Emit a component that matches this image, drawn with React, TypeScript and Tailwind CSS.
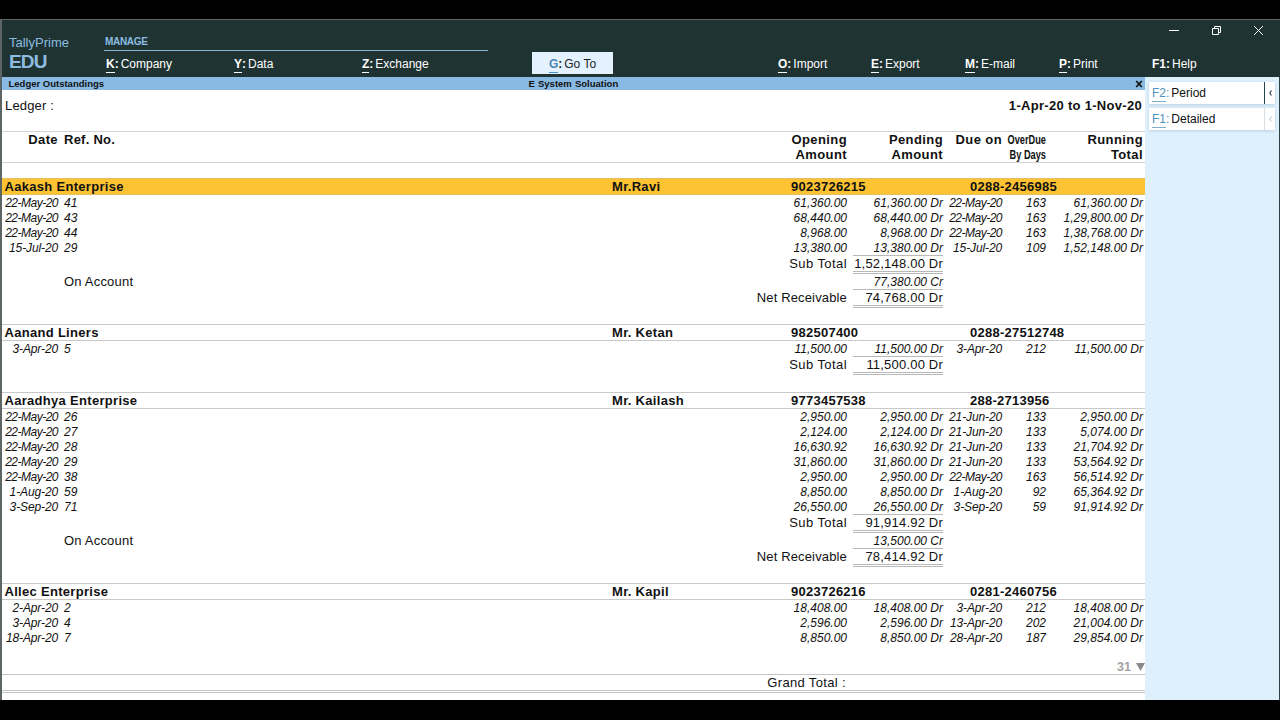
import React from "react";

type Entry = [date: string, ref: string, opening: string, due: string, days: string, running: string];

interface Party {
  name: string;
  contact: string;
  mobile: string;
  phone: string;
  entries: Entry[];
  subTotal?: string;
  onAccount?: string;
  net?: string;
  gap: string;
}

const parties: Party[] = [
  {
    name: "Aakash Enterprise", contact: "Mr.Ravi", mobile: "9023726215", phone: "0288-2456985",
    entries: [
      ["22-May-20", "41", "61,360.00", "22-May-20", "163", "61,360.00 Dr"],
      ["22-May-20", "43", "68,440.00", "22-May-20", "163", "1,29,800.00 Dr"],
      ["22-May-20", "44", "8,968.00", "22-May-20", "163", "1,38,768.00 Dr"],
      ["15-Jul-20", "29", "13,380.00", "15-Jul-20", "109", "1,52,148.00 Dr"],
    ],
    subTotal: "1,52,148.00 Dr", onAccount: "77,380.00 Cr", net: "74,768.00 Dr", gap: "mb-[16px]",
  },
  {
    name: "Aanand Liners", contact: "Mr. Ketan", mobile: "982507400", phone: "0288-27512748",
    entries: [["3-Apr-20", "5", "11,500.00", "3-Apr-20", "212", "11,500.00 Dr"]],
    subTotal: "11,500.00 Dr", gap: "mb-[17px]",
  },
  {
    name: "Aaradhya Enterprise", contact: "Mr. Kailash", mobile: "9773457538", phone: "288-2713956",
    entries: [
      ["22-May-20", "26", "2,950.00", "21-Jun-20", "133", "2,950.00 Dr"],
      ["22-May-20", "27", "2,124.00", "21-Jun-20", "133", "5,074.00 Dr"],
      ["22-May-20", "28", "16,630.92", "21-Jun-20", "133", "21,704.92 Dr"],
      ["22-May-20", "29", "31,860.00", "21-Jun-20", "133", "53,564.92 Dr"],
      ["22-May-20", "38", "2,950.00", "22-May-20", "163", "56,514.92 Dr"],
      ["1-Aug-20", "59", "8,850.00", "1-Aug-20", "92", "65,364.92 Dr"],
      ["3-Sep-20", "71", "26,550.00", "3-Sep-20", "59", "91,914.92 Dr"],
    ],
    subTotal: "91,914.92 Dr", onAccount: "13,500.00 Cr", net: "78,414.92 Dr", gap: "mb-[16px]",
  },
  {
    name: "Allec Enterprise", contact: "Mr. Kapil", mobile: "9023726216", phone: "0281-2460756",
    entries: [
      ["2-Apr-20", "2", "18,408.00", "3-Apr-20", "212", "18,408.00 Dr"],
      ["3-Apr-20", "4", "2,596.00", "13-Apr-20", "202", "21,004.00 Dr"],
      ["18-Apr-20", "7", "8,850.00", "28-Apr-20", "187", "29,854.00 Dr"],
    ],
    gap: "mb-0",
  },
];

const COLS = "grid grid-cols-[56px_693px_96px_96px_59px_44px_97px] whitespace-nowrap";

function MenuItem({ k, label, className }: { k: string; label: string; className: string }) {
  return (
    <div className={`flex h-[22px] shrink-0 items-center pt-[3px] text-[12px] leading-[15px] ${className}`}>
      <span className="border-b border-current font-bold">{k}</span>
      <span className="mr-[2px] pb-px font-bold">:</span>
      <span className="pb-px">{label}</span>
    </div>
  );
}

function DateText({ value }: { value: string }) {
  return <span className={value.includes("May") ? "tracking-[-0.5px]" : "tracking-[-0.12px]"}>{value}</span>;
}

function EntryRow({ entry }: { entry: Entry }) {
  const [date, ref, opening, due, days, running] = entry;
  return (
    <div className={`${COLS} h-[15px] text-right text-[12px] italic leading-[16px]`}>
      <DateText value={date} />
      <span className="pl-[6px] text-left">{ref}</span>
      <span>{opening}</span>
      <span>{opening} Dr</span>
      <DateText value={due} />
      <span>{days}</span>
      <span>{running}</span>
    </div>
  );
}

function TotalRow({ label, amount, labelClass }: { label: string; amount: string; labelClass: string }) {
  return (
    <div className="flex h-[19px] text-right text-[13px]">
      <span className={`w-[845px] leading-[18px] ${labelClass}`}>{label}</span>
      <span className="ml-[6px] w-[90px] border-b-[3px] border-t border-double border-[#b8b8b8] leading-[15px] tracking-[0.2px] [border-top-style:solid]">
        {amount}
      </span>
    </div>
  );
}

function PartyBlock({ party, selected }: { party: Party; selected: boolean }) {
  return (
    <section className={party.gap}>
      <div
        className={`flex h-[17px] border-y pl-[2.5px] text-[13px] font-bold leading-[16px] tracking-[0.3px] ${
          selected ? "border-[#e3bd62] bg-[#fdc333]" : "border-[#c9c9c9]"
        }`}
      >
        <span className="w-[607.5px]">{party.name}</span>
        <span className="w-[179px]">{party.contact}</span>
        <span className="w-[179px] tracking-[0.25px]">{party.mobile}</span>
        <span className="tracking-[0.25px]">{party.phone}</span>
      </div>
      {party.entries.map((e) => (
        <EntryRow key={e[0] + e[1]} entry={e} />
      ))}
      {party.subTotal && <TotalRow label="Sub Total" amount={party.subTotal} labelClass="tracking-[0.42px]" />}
      {party.onAccount && (
        <div className="flex h-[15px] leading-[16px]">
          <span className="w-[839px] pl-[62px] text-[13px] tracking-[0.2px]">On Account</span>
          <span className="w-[102px] text-right text-[12px] italic">{party.onAccount}</span>
        </div>
      )}
      {party.net && <TotalRow label="Net Receivable" amount={party.net} labelClass="tracking-[0.15px]" />}
    </section>
  );
}

function SideButton({ k, label, active }: { k: string; label: string; active: boolean }) {
  return (
    <div className="flex h-[22px] w-[126px] items-center bg-white text-[12px] shadow-[0_1px_3px_#b9cfdf]">
      <span className="ml-[3px] mt-px border-b border-[#7fb0d2] leading-[15px] text-[#5090bd]">{k}</span>
      <span className="mr-[2px] leading-[15px] text-[#5090bd]">:</span>
      <span className="flex-1 leading-[15px]">{label}</span>
      <span
        className={`flex h-full w-[11px] items-center justify-center border-l ${
          active ? "border-[#26444f] text-[#26444f]" : "border-[#d5dee5] text-[#c5ccd2]"
        }`}
      >
        <svg width="5" height="8" viewBox="0 0 5 8" fill="none" stroke="currentColor" strokeWidth="1.2">
          <path d="M3.5 1.5 1.8 4l1.7 2.5" />
        </svg>
      </span>
    </div>
  );
}

export default function App() {
  return (
    <div className="flex h-[720px] w-[1280px] flex-col overflow-hidden bg-black pt-[19px] font-['Liberation_Sans',Arial,sans-serif] text-[#111]">
      <div className="flex h-[681px] flex-col border-l-2 border-t border-[#5d6665] bg-white">
        <header className="flex h-[57px] shrink-0 bg-[#1f3332] text-white">
          <div className="w-[102px] pl-[7px] pt-[15px] text-[#8cbde0]">
            <div className="text-[13px] leading-[16px]">TallyPrime</div>
            <div className="text-[19px] font-bold leading-[21px] tracking-[-0.8px]">EDU</div>
          </div>
          <div className="flex flex-1 flex-col">
            <div className="flex h-[31px] items-end">
              <div className="h-[16px] w-[384px] border-b border-[#86b5cf] pl-[1px] pt-px text-[10px] font-bold leading-[12px] tracking-[-0.3px] text-[#8cbde0]">
                MANAGE
              </div>
              <div className="ml-auto flex h-[31px] w-[111px] items-start justify-between pr-[16px] pt-[5px]">
                <svg width="10" height="11" viewBox="0 0 10 11" stroke="#fff" fill="none"><path d="M0 5.5h10" /></svg>
                <svg width="11" height="11" viewBox="0 0 11 11" stroke="#fff" fill="none"><path d="M1.5 3.5h6v6h-6zM3.5 3.5v-2h6v6h-2" /></svg>
                <svg width="11" height="11" viewBox="0 0 11 11" stroke="#fff" fill="none"><path d="m1 1 9 9M10 1l-9 9" /></svg>
              </div>
            </div>
            <div className="flex pl-[2px] pt-[1px]">
              <MenuItem k="K" label="Company" className="w-[128px]" />
              <MenuItem k="Y" label="Data" className="w-[128px]" />
              <MenuItem k="Z" label="Exchange" className="w-[170px]" />
              <div className="flex h-[22px] w-[81px] items-center justify-center bg-[#e3f2fe] pt-[3px] text-[12px] leading-[15px] text-[#222]">
                <span className="border-b border-[#4b8fbd] font-bold text-[#4b86b2]">G</span>
                <span className="mr-[2px] pb-px font-bold">:</span>
                <span className="pb-px">Go To</span>
              </div>
              <MenuItem k="O" label="Import" className="ml-[165px] w-[93px]" />
              <MenuItem k="E" label="Export" className="w-[94px]" />
              <MenuItem k="M" label="E-mail" className="w-[94px]" />
              <MenuItem k="P" label="Print" className="w-[93px]" />
              <div className="flex h-[22px] items-center pt-px text-[12px]">
                <span className="mr-[2px] font-bold">F1:</span>Help
              </div>
            </div>
          </div>
        </header>

        <div className="flex flex-1">
          <main className="flex w-[1143px] flex-col">
            <div className="flex h-[13px] items-center bg-[#88bae3] pl-[6.5px] text-[9.5px] font-bold leading-[13px]">
              <span className="w-[520px]">Ledger Outstandings</span>
              <span className="[word-spacing:0.5px]">E System Soluation</span>
              <svg className="ml-auto mr-[2px] mt-px" width="8" height="8" viewBox="0 0 8 8" stroke="#111" strokeWidth="1.7"><path d="m1.200 1 5.600 6M6.800 1 1.200 7" /></svg>
            </div>
            <div className="flex h-[41px] justify-between pl-[3px] pr-[3px] pt-[8px] text-[13px] leading-[16px]">
              <span className="tracking-[0.15px]">Ledger :</span>
              <span className="font-bold tracking-[0.3px]">1-Apr-20 to 1-Nov-20</span>
            </div>
            <div className={`${COLS} h-[32px] border-y border-[#d3d3d3] text-right text-[13px] font-bold leading-[15px] tracking-[0.4px]`}>
              <span>Date</span>
              <span className="pl-[6px] text-left tracking-[0.25px]">Ref. No.</span>
              <span>Opening<br />Amount</span>
              <span>Pending<br />Amount</span>
              <span>Due on</span>
              <span className="origin-right scale-x-[0.71] tracking-normal"><span className="float-right">OverDue<br />By Days</span></span>
              <span>Running<br />Total</span>
            </div>
            <div className="pt-[15px]">
              {parties.map((p, i) => (
                <PartyBlock key={p.name} party={p} selected={i === 0} />
              ))}
            </div>
            <div className="flex h-[29px] items-end justify-end text-[#909090]">
              <span className="mr-[5px] text-[12.5px] font-bold leading-[14px] text-[#a3a3a3]">31</span>
              <svg className="mb-[3px]" width="9" height="8" viewBox="0 0 9 8" fill="#8a8a8a"><path d="M0 0h9L4.500 8z" /></svg>
            </div>
            <div className="h-[19px] border-b-[3px] border-t border-double border-[#c4c4c4] text-[13px] leading-[16px] [border-top-style:solid]">
              <div className="w-[844px] text-right tracking-[0.35px]">Grand Total :</div>
            </div>
          </main>
          <aside className="flex flex-1 flex-col gap-[4px] border-r border-[#2b4345] bg-[#dff0fd] pl-[4px] pt-[5px]">
            <SideButton k="F2" label="Period" active />
            <SideButton k="F1" label="Detailed" active={false} />
          </aside>
        </div>
      </div>
    </div>
  );
}
